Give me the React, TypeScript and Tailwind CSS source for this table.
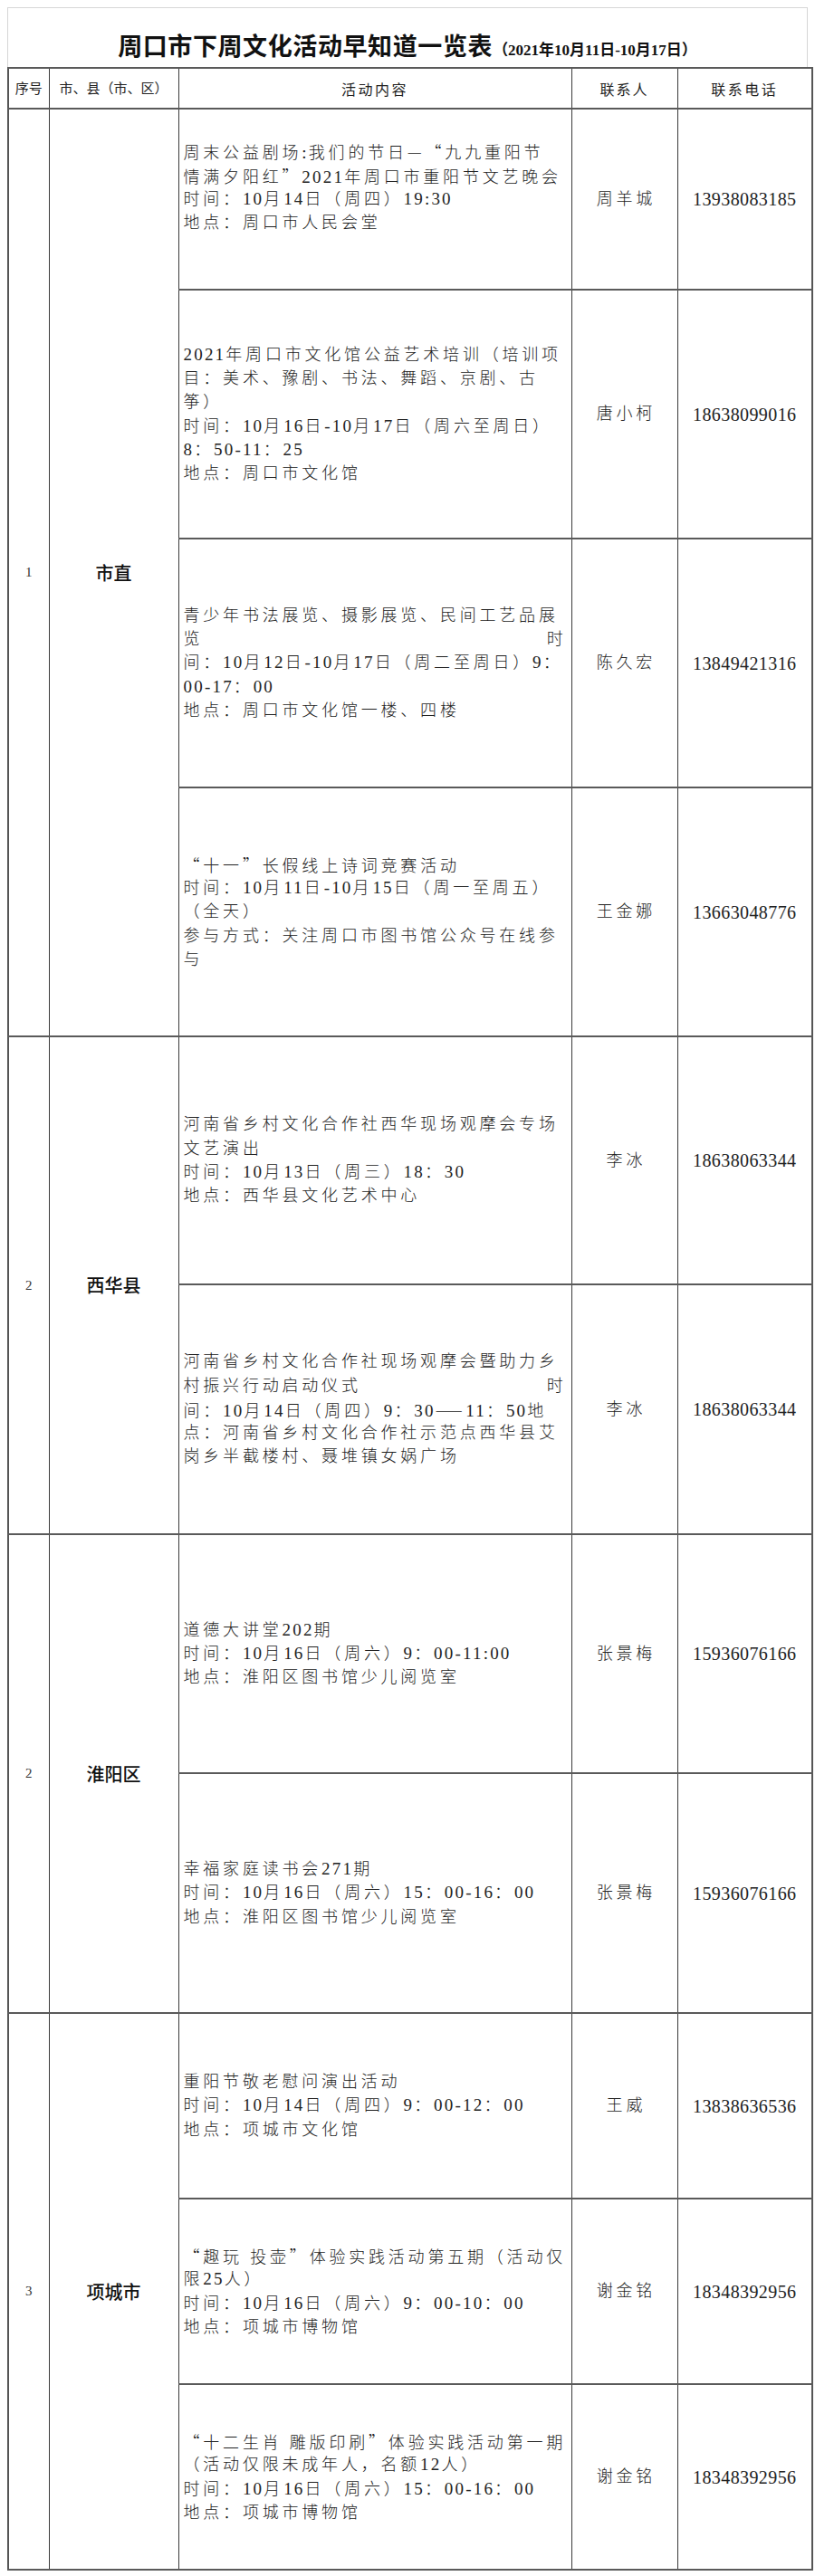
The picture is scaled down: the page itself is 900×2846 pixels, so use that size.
import React from "react";

type Row = { lines: (string | [string, string])[]; name: string; phone: string; h: string };
type Group = { seq: string; region: string; rows: Row[] };

const groups: Group[] = [
  {
    seq: "1",
    region: "市直",
    rows: [
      {
        h: "h-[200px]",
        lines: [
          "周末公益剧场:我们的节日—“九九重阳节",
          "情满夕阳红”2021年周口市重阳节文艺晚会",
          "时间：10月14日（周四）19:30",
          "地点：周口市人民会堂",
          "",
        ],
        name: "周羊城",
        phone: "13938083185",
      },
      {
        h: "h-[275px]",
        lines: [
          "2021年周口市文化馆公益艺术培训（培训项",
          "目：美术、豫剧、书法、舞蹈、京剧、古",
          "筝）",
          "时间：10月16日-10月17日（周六至周日）",
          "8：50-11：25",
          "地点：周口市文化馆",
        ],
        name: "唐小柯",
        phone: "18638099016",
      },
      {
        h: "h-[275px]",
        lines: [
          "青少年书法展览、摄影展览、民间工艺品展",
          ["览", "时"],
          "间：10月12日-10月17日（周二至周日）9：",
          "00-17：00",
          "地点：周口市文化馆一楼、四楼",
        ],
        name: "陈久宏",
        phone: "13849421316",
      },
      {
        h: "h-[275px]",
        lines: [
          "“十一”长假线上诗词竞赛活动",
          "时间：10月11日-10月15日（周一至周五）",
          "（全天）",
          "参与方式：关注周口市图书馆公众号在线参",
          "与",
        ],
        name: "王金娜",
        phone: "13663048776",
      },
    ],
  },
  {
    seq: "2",
    region: "西华县",
    rows: [
      {
        h: "h-[274px]",
        lines: [
          "河南省乡村文化合作社西华现场观摩会专场",
          "文艺演出",
          "时间：10月13日（周三）18：30",
          "地点：西华县文化艺术中心",
        ],
        name: "李冰",
        phone: "18638063344",
      },
      {
        h: "h-[276px]",
        lines: [
          "河南省乡村文化合作社现场观摩会暨助力乡",
          ["村振兴行动启动仪式", "时"],
          "间：10月14日（周四）9：30——11：50地",
          "点：河南省乡村文化合作社示范点西华县艾",
          "岗乡半截楼村、聂堆镇女娲广场",
        ],
        name: "李冰",
        phone: "18638063344",
      },
    ],
  },
  {
    seq: "2",
    region: "淮阳区",
    rows: [
      {
        h: "h-[264px]",
        lines: ["道德大讲堂202期", "时间：10月16日（周六）9：00-11:00", "地点：淮阳区图书馆少儿阅览室"],
        name: "张景梅",
        phone: "15936076166",
      },
      {
        h: "h-[265px]",
        lines: ["幸福家庭读书会271期", "时间：10月16日（周六）15：00-16：00", "地点：淮阳区图书馆少儿阅览室"],
        name: "张景梅",
        phone: "15936076166",
      },
    ],
  },
  {
    seq: "3",
    region: "项城市",
    rows: [
      {
        h: "h-[205px]",
        lines: ["重阳节敬老慰问演出活动", "时间：10月14日（周四）9：00-12：00", "地点：项城市文化馆"],
        name: "王威",
        phone: "13838636536",
      },
      {
        h: "h-[205px]",
        lines: [
          "“趣玩 投壶”体验实践活动第五期（活动仅",
          "限25人）",
          "时间：10月16日（周六）9：00-10：00",
          "地点：项城市博物馆",
        ],
        name: "谢金铭",
        phone: "18348392956",
      },
      {
        h: "h-[205px]",
        lines: [
          "“十二生肖 雕版印刷”体验实践活动第一期",
          "（活动仅限未成年人，名额12人）",
          "时间：10月16日（周六）15：00-16：00",
          "地点：项城市博物馆",
        ],
        name: "谢金铭",
        phone: "18348392956",
      },
    ],
  },
];

function T({ s }: { s: string }) {
  const parts = s.split(/([“”—]|[0-9:\-]+)/).filter((p) => p !== "");
  return (
    <>
      {parts.map((p, i) =>
        p === "“" || p === "”" || p === "—" ? (
          <span key={i} className="font-['Noto_Sans_CJK_SC',sans-serif]">
            {p}
          </span>
        ) : /^[0-9:\-]+$/.test(p) ? (
          <span key={i} className="text-[19px] tracking-[2.2px]">
            {p}
          </span>
        ) : (
          <React.Fragment key={i}>{p}</React.Fragment>
        )
      )}
    </>
  );
}

const cell = "border border-[#3a3a3a] border-y-2 border-y-[#5a5a5a] p-0 align-middle";
const bodyFont =
  "font-['Liberation_Serif','Noto_Sans_CJK_SC',serif] font-light text-[18px] tracking-[3.8px] text-[#222]";

export default function App() {
  return (
    <div className="w-[900px] min-h-[2846px] bg-white pt-2 pb-2">
      <div className="mx-2 h-[66px] border-x border-t border-[#d6d6d6] flex items-baseline justify-center pt-[26px] font-['Noto_Sans_CJK_SC',sans-serif] font-bold text-[#111]">
        <span className="text-[27px] leading-[30px] tracking-[0.6px]">周口市下周文化活动早知道一览表</span>
        <span className="text-[17px] leading-[30px] font-['Liberation_Serif','Noto_Sans_CJK_SC',serif] font-bold">
          （2021年10月11日-10月17日）
        </span>
      </div>
      <table className="ml-2 w-[888px] table-fixed border-collapse border-2 border-[#555]">
        <colgroup>
          <col className="w-[45px]" />
          <col className="w-[143px]" />
          <col className="w-[434px]" />
          <col className="w-[117px]" />
          <col className="w-[149px]" />
        </colgroup>
        <thead>
          <tr className="h-[45px] font-['Noto_Sans_CJK_SC',sans-serif] text-[#222]">
            <th className={`${cell} text-[15px] font-normal text-center`}>序号</th>
            <th className={`${cell} text-[15px] font-normal text-center`}>市、县（市、区）</th>
            <th className={`${cell} text-[16px] font-normal text-center tracking-[2.5px]`}>活动内容</th>
            <th className={`${cell} text-[16px] font-normal text-center tracking-[2px]`}>联系人</th>
            <th className={`${cell} text-[16px] font-normal text-center tracking-[2.5px]`}>联系电话</th>
          </tr>
        </thead>
        <tbody>
          {groups.map((g, gi) =>
            g.rows.map((r, ri) => (
              <tr key={`${gi}-${ri}`} className={r.h}>
                {ri === 0 && (
                  <>
                    <td
                      rowSpan={g.rows.length}
                      className={`${cell} text-center font-['Liberation_Serif',serif] text-[15px] text-[#333]`}
                    >
                      {g.seq}
                    </td>
                    <td
                      rowSpan={g.rows.length}
                      className={`${cell} text-center font-['Noto_Sans_CJK_SC',sans-serif] font-medium text-[20px] text-[#111]`}
                    >
                      {g.region}
                    </td>
                  </>
                )}
                <td className={`${cell} px-[5px]`}>
                  <div className={`${bodyFont} leading-[26.3px]`}>
                    {r.lines.map((l, li) =>
                      Array.isArray(l) ? (
                        <div key={li} className="flex justify-between whitespace-nowrap h-[26.3px]">
                          <span>{l[0]}</span>
                          <span>{l[1]}</span>
                        </div>
                      ) : l === "" ? (
                        <div key={li} className="h-[26.3px]" />
                      ) : (
                        <div key={li} className="whitespace-nowrap h-[26.3px]">
                          <T s={l} />
                        </div>
                      )
                    )}
                  </div>
                </td>
                <td className={`${cell} text-center`}>
                  <span className={`${bodyFont} pl-[3.8px]`}>{r.name}</span>
                </td>
                <td className={`${cell} text-center font-['Liberation_Serif',serif] text-[20px] tracking-[0.4px] text-[#222]`}>
                  {r.phone}
                </td>
              </tr>
            ))
          )}
        </tbody>
      </table>
    </div>
  );
}
